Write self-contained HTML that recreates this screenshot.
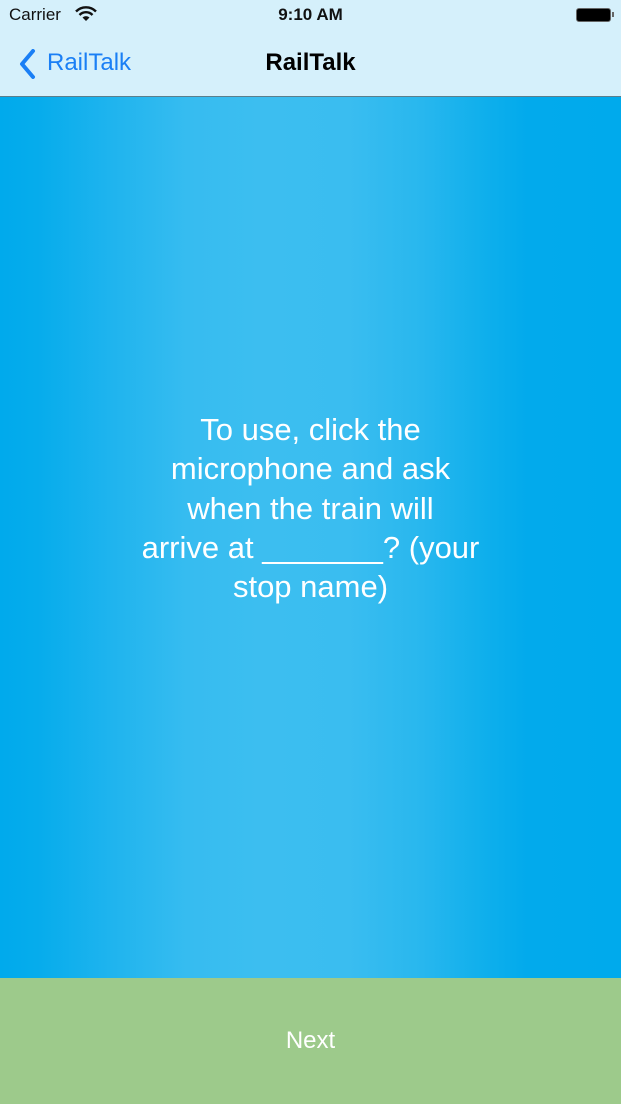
<!DOCTYPE html>
<html><head><meta charset="utf-8"><style>
*{margin:0;padding:0;box-sizing:border-box}
body{width:621px;height:1104px;overflow:hidden;font-family:"Liberation Sans",Arial,sans-serif;position:relative;background:#00aaec}
#hdr{position:absolute;left:0;top:0;width:621px;height:97px;background:#d5f0fb;border-bottom:1px solid #5a7f8c}
#main{position:absolute;left:0;top:97px;width:621px;height:881px;background:linear-gradient(90deg,#00aaec 0%,#06acec 6%,#1fb4ee 18%,#36bcf0 30%,#3cbef0 42%,#3abdf0 56%,#28b7ee 68%,#0fafec 78%,#02aaec 85%,#00aaec 100%)}
#foot{position:absolute;left:0;top:978px;width:621px;height:126px;background:#9dca8b}
.t{position:absolute;white-space:nowrap}
.line{position:absolute;left:0;width:621px;text-align:center;color:#fff;font-size:31px;line-height:40px}
</style></head><body>
<div id="hdr">
  <div class="t" style="left:9px;top:5px;font-size:17px;color:#111">Carrier</div>
  <svg style="position:absolute;left:75px;top:6px" width="22" height="16" viewBox="0 0 22 16">
    <path d="M1 5.5 A14 14 0 0 1 21 5.5" stroke="#111" stroke-width="2.4" fill="none"/>
    <path d="M4.5 9 A9 9 0 0 1 17.5 9" stroke="#111" stroke-width="2.4" fill="none"/>
    <path d="M11 15 L7.5 11.5 A5 5 0 0 1 14.5 11.5 Z" fill="#111"/>
  </svg>
  <div class="t" style="left:0;width:621px;text-align:center;top:5px;font-size:17px;font-weight:bold;color:#111">9:10 AM</div>
  <div style="position:absolute;left:576px;top:8px;width:35px;height:14px;border:1px solid #666;border-radius:3px;background:#000"></div>
  <div style="position:absolute;left:612px;top:12px;width:2px;height:5px;background:#666"></div>
  <svg style="position:absolute;left:18px;top:49px" width="20" height="30" viewBox="0 0 20 30">
    <path d="M15 2 L4 15 L15 28" stroke="#1a7ff5" stroke-width="4" fill="none" stroke-linecap="round" stroke-linejoin="round"/>
  </svg>
  <div class="t" style="left:47px;top:49px;font-size:24px;color:#1a7ff5">RailTalk</div>
  <div class="t" style="left:0;width:621px;text-align:center;top:49px;font-size:24px;font-weight:bold;color:#000">RailTalk</div>
</div>
<div id="main"></div>
<div class="line" style="top:410px">To use, click the</div>
<div class="line" style="top:449px">microphone and ask</div>
<div class="line" style="top:489px">when the train will</div>
<div class="line" style="top:528px">arrive at _______? (your</div>
<div class="line" style="top:567px">stop name)</div>
<div id="foot"></div>
<div class="t" style="left:0;width:621px;text-align:center;top:1027px;font-size:24px;color:#fff">Next</div>
</body></html>
